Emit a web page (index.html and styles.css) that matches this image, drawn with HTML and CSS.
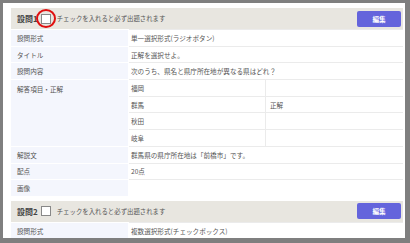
FILE: index.html
```html
<!DOCTYPE HTML>
<html>
	<head>
		<meta charset="utf-8"/>
		<link rel="stylesheet" href="styles.css">
	</head>
	<body>
		<div class="frame">
			<div class="q">
				<div class="qhead">
					<span class="qno">設問1</span>
					<span class="chk mark"></span>
					<span class="note">チェックを入れると必ず出題されます</span>
					<span class="btn">編集</span>
				</div>
				<div class="grid">
					<div class="lb">設問形式</div><div class="vl wide">単一選択形式(ラジオボタン)</div>
					<div class="lb">タイトル</div><div class="vl wide">正解を選択せよ。</div>
					<div class="lb">設問内容</div><div class="vl wide">次のうち、県名と県庁所在地が異なる県はどれ？</div>
					<div class="lb span4">解答項目・正解</div>
					<div class="vl">福岡</div><div class="vl ok"></div>
					<div class="vl">群馬</div><div class="vl ok">正解</div>
					<div class="vl">秋田</div><div class="vl ok"></div>
					<div class="vl">岐阜</div><div class="vl ok"></div>
					<div class="lb">解説文</div><div class="vl wide">群馬県の県庁所在地は「前橋市」です。</div>
					<div class="lb">配点</div><div class="vl wide">20点</div>
					<div class="lb">画像</div><div class="vl wide"></div>
				</div>
			</div>
			<div class="q">
				<div class="qhead">
					<span class="qno">設問2</span>
					<span class="chk"></span>
					<span class="note">チェックを入れると必ず出題されます</span>
					<span class="btn">編集</span>
				</div>
				<div class="grid">
					<div class="lb">設問形式</div><div class="vl wide">複数選択形式(チェックボックス)</div>
				</div>
			</div>
		</div>
	</body>
</html>
```

FILE: styles.css
```css
html,body{margin:0;padding:0;background:#fff;}
body{font-family:"Noto Sans CJK JP","Liberation Sans",sans-serif;color:#555;}
.frame{width:410px;height:243px;box-sizing:border-box;border:solid #7f7f7f;border-width:3px 5px 5px 3px;padding:5px 2px 0 8px;overflow:hidden;}

.q{margin-bottom:5px;}
.qhead{display:flex;align-items:center;height:21px;background:#e8e6e0;padding:0 2px 0 6px;}
.qno{font-size:8px;font-weight:bold;color:#444;}
.chk{position:relative;width:8px;height:8px;border:1px solid #888;background:#fff;margin:0 6px 0 3px;}
.mark::after{content:"";position:absolute;left:-6px;top:-6px;width:16px;height:15px;border:2px solid #e01010;border-radius:50%;}
.note{font-size:6.4px;color:#555;}
.btn{margin-left:auto;width:44px;height:16px;background:#6464dc;border-radius:2px;color:#fff;font-size:6.6px;font-weight:bold;display:flex;align-items:center;justify-content:center;}

.grid{display:grid;grid-template-columns:118px 136px 1fr;grid-auto-rows:16.7px;}
.lb,.vl{font-size:6.6px;display:flex;align-items:center;box-sizing:border-box;}
.lb{background:#f4f6fd;padding-left:6px;border-top:1px solid #fff;border-right:1px solid #fff;}
.vl{padding-left:2px;border-top:1px solid #ebebeb;}
.wide{grid-column:2 / 4;}
.span4{grid-row:span 4;align-items:flex-start;padding-top:4px;}
.ok{border-left:1px solid #ebebeb;padding-left:4px;}
```
